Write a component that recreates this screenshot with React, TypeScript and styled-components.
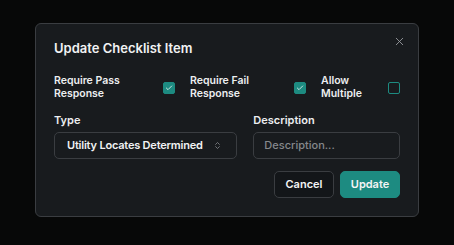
import React from "react";
import styled, { createGlobalStyle } from "styled-components";
import { Check, ChevronsUpDown, X } from "lucide-react";

const teal = "#1d8b81";

const GlobalStyle = createGlobalStyle`
  html, body {
    margin: 0;
    padding: 0;
    background: #070808;
  }
  body {
    font-family: Inter, "Noto Sans", sans-serif;
    -webkit-font-smoothing: antialiased;
  }
`;

interface Flag {
  label: string[];
  checked: boolean;
}

const flags: Flag[] = [
  { label: ["Require Pass", "Response"], checked: true },
  { label: ["Require Fail", "Response"], checked: true },
  { label: ["Allow", "Multiple"], checked: false },
];

const App: React.FC = () => {
  return (
    <>
      <GlobalStyle />
      <Screen>
        <Dialog>
          <CloseButton aria-label="Close">
            <X size={13} strokeWidth={1.6} />
          </CloseButton>
          <Title>Update Checklist Item</Title>

          <FlagGrid>
            {flags.map((f) => (
              <FlagItem key={f.label.join(" ")}>
                <FlagLabel>
                  <Line>{f.label[0]}</Line>
                  <Line>{f.label[1]}</Line>
                </FlagLabel>
                <Checkbox checked={f.checked}>
                  {f.checked && <Check size={8} strokeWidth={2.5} />}
                </Checkbox>
              </FlagItem>
            ))}
          </FlagGrid>

          <FieldGrid>
            <Field>
              <FieldLabel>Type</FieldLabel>
              <Select>
                <span>Utility Locates Determined</span>
                <ChevronsUpDown size={9} strokeWidth={2} />
              </Select>
            </Field>
            <Field>
              <FieldLabel>Description</FieldLabel>
              <Input placeholder="Description..." />
            </Field>
          </FieldGrid>

          <Footer>
            <Button>Cancel</Button>
            <Button primary>Update</Button>
          </Footer>
        </Dialog>
      </Screen>
    </>
  );
};

const Screen = styled.div`
  width: 454px;
  height: 245px;
  padding: 23px 0 0 35px;
  box-sizing: border-box;
`;

const Dialog = styled.div`
  position: relative;
  width: 384px;
  box-sizing: border-box;
  padding: 14px 18px 18px;
  background: #181b1e;
  border: 1px solid #3a3d41;
  border-radius: 6px;
  color: #f1f2f3;
`;

const CloseButton = styled.button`
  position: absolute;
  top: 11px;
  right: 12px;
  width: 13px;
  height: 13px;
  padding: 0;
  border: 0;
  background: none;
  color: #9c9fa3;
  display: flex;
  align-items: center;
  justify-content: center;
`;

const Title = styled.h2`
  margin: 0;
  font-size: 13px;
  line-height: 20px;
  font-weight: 600;
`;

const FlagGrid = styled.div`
  display: grid;
  grid-template-columns: 121px 116px 1fr;
  column-gap: 15px;
  margin-top: 17px;
`;

const FlagItem = styled.div`
  display: flex;
  align-items: center;
  justify-content: space-between;
`;

const FlagLabel = styled.span`
  display: flex;
  flex-direction: column;
  font-size: 10.5px;
  font-weight: 600;
  color: #eceef0;
`;

const Line = styled.span`
  display: block;
  line-height: 12.8px;
`;

const Checkbox = styled.span<{ checked: boolean }>`
  width: 12px;
  height: 12px;
  box-sizing: border-box;
  border-radius: 2px;
  border: 1px solid ${teal};
  background: ${(p) => (p.checked ? teal : "transparent")};
  color: #e9f5f3;
  display: flex;
  align-items: center;
  justify-content: center;
`;

const FieldGrid = styled.div`
  display: grid;
  grid-template-columns: 5fr 4fr;
  column-gap: 16px;
  margin-top: 12px;
`;

const Field = styled.div`
  display: flex;
  flex-direction: column;
  gap: 5px;
`;

const FieldLabel = styled.label`
  font-size: 11px;
  line-height: 14px;
  font-weight: 600;
  color: #eceef0;
`;

const Select = styled.div`
  height: 27px;
  box-sizing: border-box;
  display: flex;
  align-items: center;
  justify-content: space-between;
  padding: 0 14px 0 12px;
  border: 1px solid #3a3d41;
  border-radius: 5px;
  font-size: 11px;
  font-weight: 600;
  letter-spacing: -0.2px;
  color: #f1f2f3;

  svg {
    color: #8d9094;
  }
`;

const Input = styled.input`
  height: 27px;
  box-sizing: border-box;
  width: 100%;
  padding: 0 10px;
  border: 1px solid #3a3d41;
  border-radius: 5px;
  background: transparent;
  font-family: inherit;
  font-size: 11px;
  font-weight: 500;
  color: #f1f2f3;
  outline: none;

  &::placeholder {
    color: #85888c;
  }
`;

const Footer = styled.div`
  display: flex;
  justify-content: flex-end;
  gap: 6px;
  margin-top: 12px;
`;

const Button = styled.button<{ primary?: boolean }>`
  width: 60px;
  height: 27px;
  border-radius: 5px;
  font-family: inherit;
  font-size: 11px;
  font-weight: 600;
  color: #f4f5f6;
  border: 1px solid ${(p) => (p.primary ? teal : "#3a3d41")};
  background: ${(p) => (p.primary ? teal : "#131619")};
  cursor: pointer;
`;

export default App;
